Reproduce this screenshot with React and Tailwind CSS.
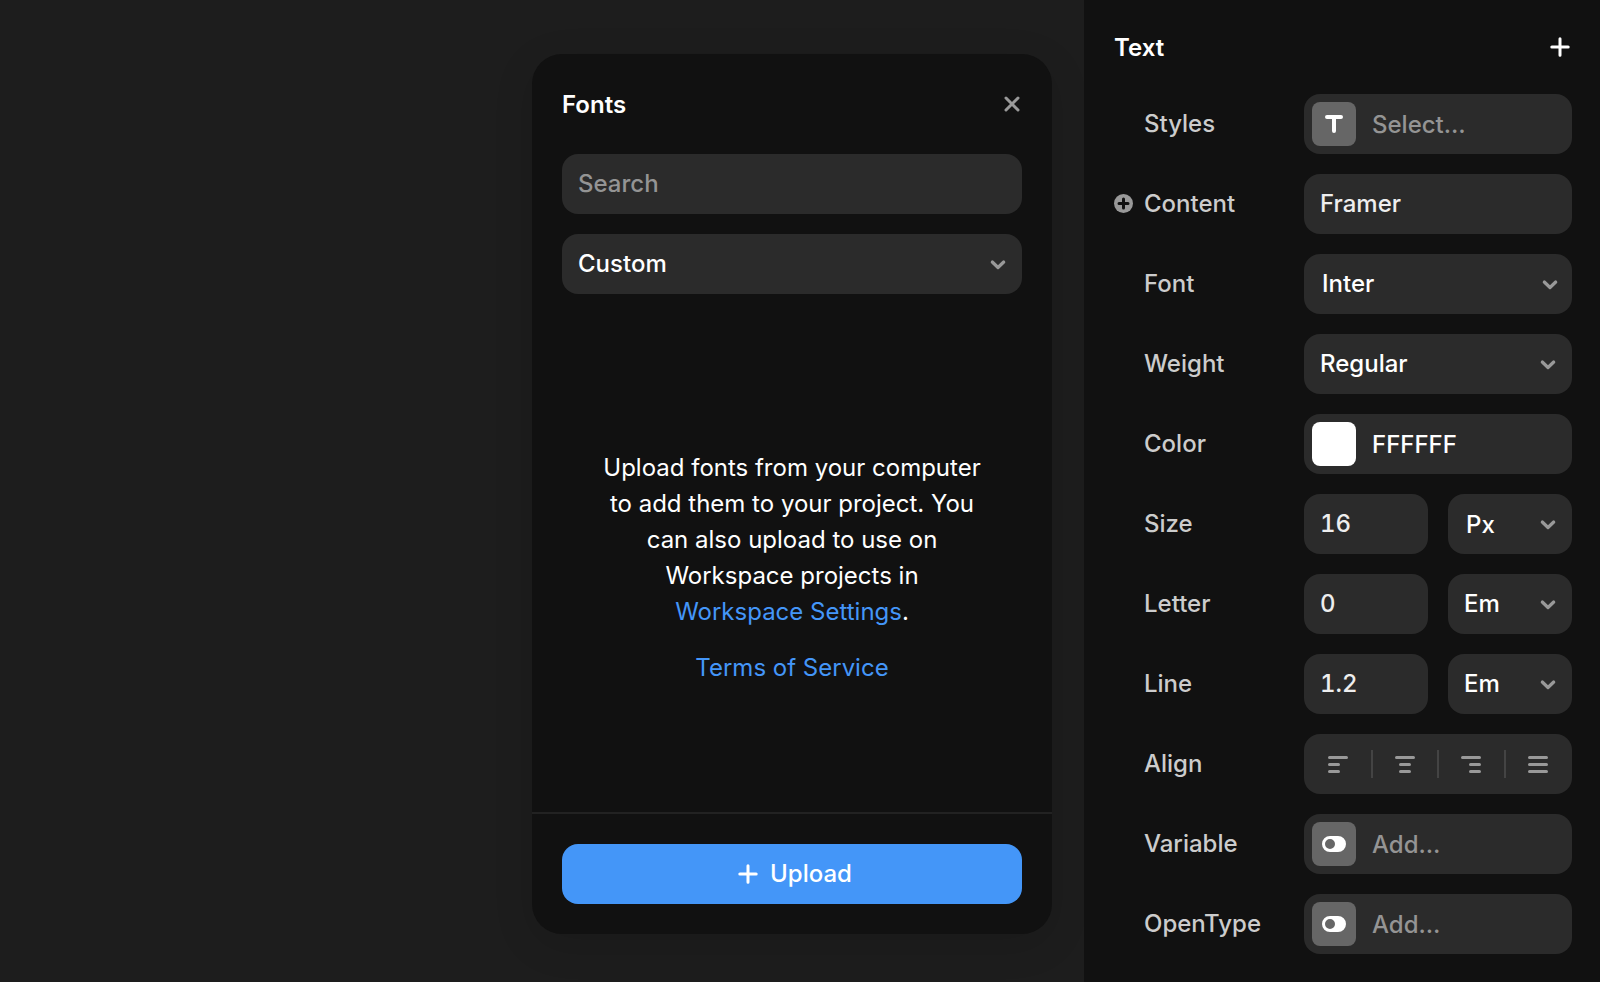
import React, { useId, useState } from "react";

const fieldClass =
  "h-[60px] w-full min-w-0 rounded-2xl bg-[#2b2b2b] outline-none focus-visible:ring-2 focus-visible:ring-[#4496f8]";

function PlusIcon() {
  return (
    <svg width="20" height="20" viewBox="0 0 20 20" fill="none" stroke="currentColor" strokeWidth="3" strokeLinecap="round" aria-hidden="true">
      <path d="M10 1.8v16.4M1.8 10h16.4" />
    </svg>
  );
}

function CloseIcon() {
  return (
    <svg width="20" height="20" viewBox="0 0 20 20" fill="none" stroke="currentColor" strokeWidth="3" strokeLinecap="round" aria-hidden="true">
      <path d="M4 4l12 12M16 4L4 16" />
    </svg>
  );
}

function Chevron() {
  return (
    <svg width="16" height="16" viewBox="0 0 16 16" fill="none" stroke="currentColor" strokeWidth="3.2" strokeLinecap="round" strokeLinejoin="round" aria-hidden="true">
      <path d="M2.3 6L8 11.5L13.7 6" />
    </svg>
  );
}

function TextIcon() {
  return (
    <svg width="20" height="20" viewBox="0 0 20 20" fill="none" stroke="currentColor" strokeWidth="4" strokeLinecap="round" aria-hidden="true">
      <path d="M3 3h14M10 3v14" />
    </svg>
  );
}

function ToggleIcon() {
  return (
    <svg width="24" height="16" viewBox="0 0 24 16" fill="currentColor" aria-hidden="true">
      <path fillRule="evenodd" d="M8 0h8a8 8 0 0 1 0 16H8A8 8 0 0 1 8 0zM8 3a5 5 0 1 0 0 10A5 5 0 0 0 8 3z" />
    </svg>
  );
}

function AlignIcon({ start, length }) {
  return (
    <svg width="20" height="20" viewBox="0 0 20 20" fill="none" stroke="currentColor" strokeWidth="3" strokeLinecap="round" aria-hidden="true">
      <path d={`M1.5 3.5h17M${start} 10.5h${length}M${start} 17.5h${length}`} />
    </svg>
  );
}

function Select({ id, label, options, className = "pl-4", chevronClassName = "right-4" }) {
  return (
    <div className="relative min-w-0 flex-1">
      <select id={id} aria-label={label} className={`${fieldClass} appearance-none pr-10 text-white ${className}`}>
        {options.map((option) => (
          <option key={option}>{option}</option>
        ))}
      </select>
      <span className={`pointer-events-none absolute inset-y-0 flex items-center text-[#999] ${chevronClassName}`}>
        <Chevron />
      </span>
    </div>
  );
}

function Row({ label, htmlFor, action, children }) {
  const Label = htmlFor ? "label" : "span";
  return (
    <div className="flex items-center">
      <div className="flex w-[30px] shrink-0 items-center">{action}</div>
      <Label htmlFor={htmlFor} className="w-40 shrink-0 text-[#ccc]">
        {label}
      </Label>
      <div className="flex min-w-0 flex-1 gap-5">{children}</div>
    </div>
  );
}

function TileButton({ id, icon, text }) {
  return (
    <button id={id} type="button" className={`${fieldClass} flex items-center gap-4 px-2 text-left text-[#949494]`}>
      <span className="flex size-11 shrink-0 items-center justify-center rounded-lg bg-[#666] text-white">{icon}</span>
      <span className="pt-0.5">{text}</span>
    </button>
  );
}

function UnitRow({ label, value, units, unitClassName }) {
  const id = useId();
  return (
    <Row label={label} htmlFor={id}>
      <div className="min-w-0 flex-1">
        <input id={id} defaultValue={value} className={`${fieldClass} px-4 pb-0.5 text-[#eee] tabular-nums`} />
      </div>
      <Select label={`${label} unit`} options={units} className={unitClassName} />
    </Row>
  );
}

const alignments = [
  { name: "Left", start: 1.5, length: 9 },
  { name: "Center", start: 5.5, length: 9 },
  { name: "Right", start: 9.5, length: 9 },
  { name: "Justify", start: 1.5, length: 17 },
];

function AlignControl() {
  const [selected, setSelected] = useState(null);
  return (
    <div role="group" aria-label="Align" className="h-[60px] w-full rounded-2xl bg-[#2b2b2b] px-0.5 py-4">
      <div className="flex h-7 divide-x-2 divide-[#444]">
        {alignments.map(({ name, start, length }) => (
          <button
            key={name}
            type="button"
            aria-label={name}
            aria-pressed={selected === name}
            onClick={() => setSelected(name)}
            className="flex flex-1 items-center justify-center text-[#999] aria-pressed:text-white"
          >
            <AlignIcon start={start} length={length} />
          </button>
        ))}
      </div>
    </div>
  );
}

function FontsPanel() {
  return (
    <section aria-label="Fonts" className="flex w-[520px] flex-col rounded-[30px] bg-[#111] shadow-[0_10px_40px_rgba(0,0,0,0.12)]">
      <header className="flex h-[100px] items-center justify-between px-[30px]">
        <h2 className="pt-0.5 font-semibold text-white">Fonts</h2>
        <button type="button" aria-label="Close" className="text-[#999]">
          <CloseIcon />
        </button>
      </header>
      <div className="flex flex-col gap-5 px-[30px]">
        <input type="search" aria-label="Search" placeholder="Search" className={`${fieldClass} px-4 pb-0.5 text-white placeholder:text-[#949494]`} />
        <div className="flex">
          <Select label="Font source" options={["Custom", "Google", "All"]} />
        </div>
      </div>
      <div className="flex flex-1 flex-col items-center justify-center gap-5 px-[70px] pt-[30px] text-center font-normal leading-9 text-white">
        <p>
          Upload fonts from your computer to add them to your project. You can also upload to use on Workspace projects in{" "}
          <a href="#workspace" className="text-[#4496f8]">Workspace Settings</a>.
        </p>
        <a href="#terms" className="text-[#4496f8]">Terms of Service</a>
      </div>
      <footer className="border-t-2 border-[#222] p-[30px]">
        <button type="button" className="flex h-[60px] w-full items-center justify-center gap-3 rounded-2xl bg-[#4496f8] pl-1.5 text-white">
          <PlusIcon />
          Upload
        </button>
      </footer>
    </section>
  );
}

function TextPanel() {
  return (
    <aside aria-label="Text" className="w-[516px] shrink-0 bg-[#111] pr-7 pl-[30px]">
      <header className="flex h-[94px] items-center justify-between">
        <h2 className="pt-0.5 font-semibold text-white">Text</h2>
        <button type="button" aria-label="Add text property" className="pr-0.5 text-white">
          <PlusIcon />
        </button>
      </header>
      <div className="flex flex-col gap-5">
        <Row label="Styles" htmlFor="styles">
          <TileButton id="styles" icon={<TextIcon />} text="Select…" />
        </Row>
        <Row
          label="Content"
          htmlFor="content"
          action={
            <button type="button" aria-label="Add content variable" className="text-[#999]">
              <svg width="20" height="20" viewBox="0 0 20 20" aria-hidden="true">
                <circle cx="9.5" cy="9.5" r="9.5" fill="currentColor" />
                <path d="M9.5 5v9M5 9.5h9" stroke="#111" strokeWidth="3" strokeLinecap="round" />
              </svg>
            </button>
          }
        >
          <input id="content" defaultValue="Framer" className={`${fieldClass} px-4 pb-0.5 text-[#eee]`} />
        </Row>
        <Row label="Font" htmlFor="font">
          <Select id="font" options={["Inter", "Roboto", "Lato"]} className="pl-[18px]" chevronClassName="right-3.5" />
        </Row>
        <Row label="Weight" htmlFor="weight">
          <Select id="weight" options={["Regular", "Medium", "Bold"]} />
        </Row>
        <Row label="Color" htmlFor="color">
          <div className={`${fieldClass} flex items-center gap-4 px-2`}>
            <button type="button" aria-label="Pick color" className="size-11 shrink-0 rounded-lg bg-white" />
            <input id="color" defaultValue="FFFFFF" className="w-full min-w-0 bg-transparent pt-0.5 text-white outline-none" />
          </div>
        </Row>
        <UnitRow label="Size" value="16" units={["Px", "Em", "Rem"]} unitClassName="pl-[18px] pt-0.5" />
        <UnitRow label="Letter" value="0" units={["Em", "Px"]} />
        <UnitRow label="Line" value="1.2" units={["Em", "Px"]} />
        <Row label="Align">
          <AlignControl />
        </Row>
        <Row label="Variable" htmlFor="variable">
          <TileButton id="variable" icon={<ToggleIcon />} text="Add…" />
        </Row>
        <Row label="OpenType" htmlFor="opentype">
          <TileButton id="opentype" icon={<ToggleIcon />} text="Add…" />
        </Row>
      </div>
    </aside>
  );
}

export default function App() {
  return (
    <div className="flex min-h-screen bg-[#1d1d1d] font-['Inter',sans-serif] text-[24px] leading-9 font-medium antialiased">
      <main className="flex min-w-0 flex-1 justify-end pt-[54px] pr-8 pb-12">
        <FontsPanel />
      </main>
      <TextPanel />
    </div>
  );
}
